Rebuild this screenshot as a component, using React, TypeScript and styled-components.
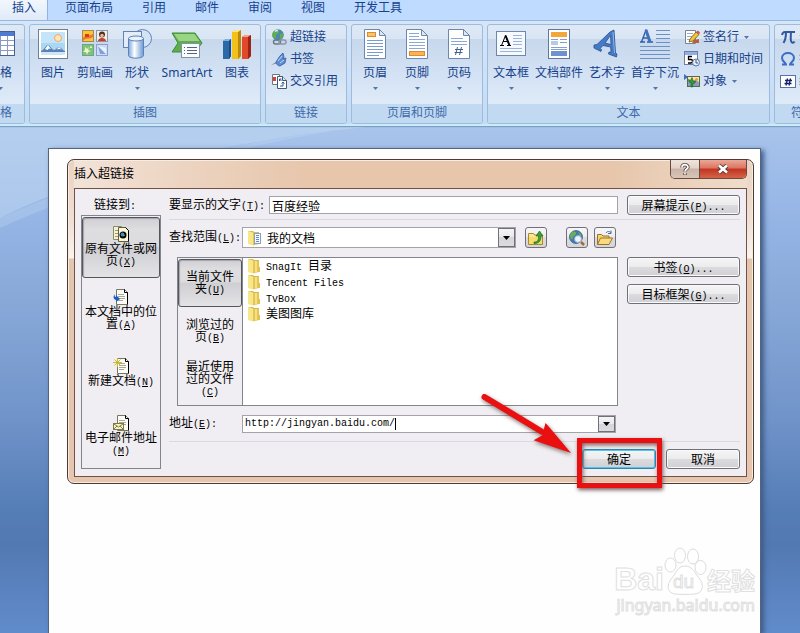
import React from "react";
import styled, { createGlobalStyle, css } from "styled-components";

const GlobalStyle = createGlobalStyle`
  * { box-sizing: border-box; }
  body { margin: 0; font: 12px/16px "Noto Sans", "Noto Sans CJK SC", sans-serif; color: #000; }
  button, input, select { font: inherit; color: inherit; margin: 0; padding: 0; border: 0; background: none; }
  ul { list-style: none; margin: 0; padding: 0; }
  svg { display: block; flex: none; }
`;

/* ---------- window ---------- */

const Screen = styled.div`
  position: relative;
  display: flex;
  flex-direction: column;
  min-height: 100vh;
  overflow: hidden;
  background: linear-gradient(#a8c4ec 127px, #93b3e4 230px, #88a9d8 300px, #7093c9 420px, #557db6 510px, #5379b2 545px, #618ccb 633px);
`;

const Swoosh = styled.svg`
  position: absolute;
  left: 0;
  top: 126px;
`;

const Tabs = styled.nav`
  display: flex;
  gap: 1px;
  height: 20px;
  background: #bfdbff;
  color: #15428b;
`;

const Tab = styled.button<{ $active?: boolean }>`
  flex: none;
  height: 20px;
  padding: 0 14px 4px;
  ${(p) =>
    p.$active &&
    css`
      padding: 0 11px 4px 12px;
      margin-right: 2px;
      background: linear-gradient(#f2f7fd, #dfeaf8);
      border-right: 1px solid #8db2e3;
    `}
`;

const Ribbon = styled.div`
  position: relative;
  display: flex;
  gap: 4px;
  height: 106px;
  padding: 3px 0;
  background: linear-gradient(#d6e6f9, #c4dbf5);
  border-top: 1px solid #97b8e2;
  border-bottom: 2px solid #c9edf8;
  box-shadow: 0 1px 1px #7f9cc4;
  overflow: hidden;
`;

const Group = styled.section<{ $cut?: boolean }>`
  display: flex;
  flex-direction: column;
  flex: none;
  height: 100px;
  min-width: 50px;
  margin-left: ${(p) => (p.$cut ? "-25px" : "0")};
  border: 1px solid #9dbbdc;
  border-radius: 3px;
  overflow: hidden;
  background: linear-gradient(#dfe9f6, #d9e5f4 14px, #c8d8ec 14px, #d3e2f4 50px, #dfebf8 80px);
`;

const GroupBody = styled.div`
  display: flex;
  flex: 1;
  justify-content: center;
  padding: 4px 2px 0;
  color: #15428b;
`;

const GroupTitle = styled.div`
  height: 19px;
  line-height: 18px;
  text-align: center;
  background: #c1d9f1;
  color: #3e6aaa;
`;

const BigButton = styled.button<{ $size?: "wide" | "art" }>`
  display: flex;
  flex-direction: column;
  align-items: center;
  flex: none;
  width: ${(p) => (p.$size === "wide" ? "54px" : p.$size === "art" ? "58px" : "42px")};
  white-space: nowrap;
`;

const BigLabel = styled.span`
  margin: 5px 0 5px;
  line-height: 18px;
`;

const SmallList = styled.div<{ $loose?: boolean }>`
  display: flex;
  flex-direction: column;
  flex: none;
  margin-top: -1px;
  padding: ${(p) => (p.$loose ? "0 6px 0 3px" : "0 4px 0 2px")};
`;

const SmallButton = styled.button`
  display: flex;
  align-items: center;
  gap: 3px;
  height: 22px;
  padding-bottom: 4px;
  white-space: nowrap;
`;

const SmallLabel = styled.span`
  margin-right: 2px;
`;

const Down = () => (
  <svg width="5" height="3" viewBox="0 0 5 3">
    <path d="M0 0h5L2.5 3z" fill="#5577a8" />
  </svg>
);

function Big({ icon, label, drop, size }: { icon: React.ReactNode; label: string; drop?: boolean; size?: "wide" | "art" }) {
  return (
    <BigButton $size={size}>
      {icon}
      <BigLabel>{label}</BigLabel>
      {drop && <Down />}
    </BigButton>
  );
}

function Small({ icon, label, drop }: { icon: React.ReactNode; label: string; drop?: boolean }) {
  return (
    <SmallButton>
      {icon}
      {drop ? <SmallLabel>{label}</SmallLabel> : <span>{label}</span>}
      {drop && <Down />}
    </SmallButton>
  );
}

/* ---------- ribbon icons ---------- */

const Icon30 = ({ children }: { children: React.ReactNode }) => (
  <svg width="30" height="30" viewBox="0 0 30 30">
    {children}
  </svg>
);
const Icon16 = ({ children }: { children: React.ReactNode }) => (
  <svg width="16" height="16" viewBox="0 0 16 16">
    {children}
  </svg>
);

const TableIcon = () => (
  <Icon30>
    <rect x=".5" y="2.5" width="29" height="24" fill="#fff" stroke="#4a5f8c" />
    <rect x="1" y="3" width="28" height="4" fill="#4f7cd0" />
    <path d="M1 11.5h28M1 16.5h28M1 21.5h28M8.5 7v19M15.5 7v19M22.5 7v19" stroke="#8b9bc0" />
  </Icon30>
);

const PictureIcon = () => (
  <Icon30>
    <rect x=".5" y=".5" width="29" height="29" fill="#fff" stroke="#6c8096" />
    <rect x="3" y="3" width="24" height="23" fill="#a9d7f4" />
    <path d="M3 3h24v11H3z" fill="#c4e5f9" />
    <circle cx="20" cy="9" r="3.5" fill="#fde6bd" stroke="#f0a860" />
    <path d="M3 22c3-1 5-6 7-6s4 5 6 5 3-3 5-3 4 4 6 4v4H3z" fill="#5b82b8" />
    <path d="M7 20l3-4 3 4-2-.5-1.500 1.500zM18.500 20.500l2.500-2.500 2.500 2.500-2.500-.5z" fill="#fff" />
    <path d="M3 23h24v3H3z" fill="#cfe6f5" />
  </Icon30>
);

const ClipArtIcon = () => (
  <Icon30>
    <rect x="2.500" y="1.500" width="11" height="11" fill="#fbc534" stroke="#a58a5a" />
    <path d="M3 9c3-4 6-1 10-4v3c-4 3-7 0-10 4z" fill="#f3742a" />
    <path d="M5 5h4v3H5z" fill="#d83a1c" />
    <rect x="16.500" y="1.500" width="11" height="11" fill="#f3efe4" stroke="#8b97a8" />
    <circle cx="22" cy="5.500" r="3" fill="#4a3226" />
    <circle cx="22" cy="6.500" r="1.800" fill="#f2b48a" />
    <path d="M18 12c0-4 8-4 8 0z" fill="#c2402c" />
    <rect x="2.500" y="15.500" width="11" height="11" fill="#7cc47a" stroke="#74a08a" />
    <path d="M5 18l2 2 2-2-1 3 3 1-3 1-1 3-1-3-3 0 2-2zM10 17l1 1 1-1v2h-2z" fill="#eef7c4" />
    <rect x="16.500" y="15.500" width="11" height="11" fill="#cddcf6" stroke="#8b9fc8" />
    <path d="M18 17l8 8H20z" fill="#7f9fe0" />
    <path d="M18 17l8 8V19z" fill="#fff" opacity=".6" />
  </Icon30>
);

const ShapesIcon = () => (
  <Icon30>
    <defs>
      <linearGradient id="cyl">
        <stop offset="0" stopColor="#7ba7df" />
        <stop offset=".4" stopColor="#fff" />
        <stop offset="1" stopColor="#6a98d6" />
      </linearGradient>
    </defs>
    <circle cx="20.500" cy="9.500" r="9" fill="#d3e3f6" stroke="#6283b5" />
    <rect x="1.500" y="2.500" width="18" height="16" fill="#e3edf9" stroke="#6283b5" />
    <path d="M6.500 9.500v17c0 3.500 15 3.500 15 0v-17z" fill="url(#cyl)" stroke="#5d80b5" />
    <ellipse cx="14" cy="9.500" rx="7.500" ry="2.500" fill="#eaf2fc" stroke="#5d80b5" />
  </Icon30>
);

const SmartArtIcon = () => (
  <svg width="32" height="30" viewBox="0 0 32 30">
    <path d="M1 4h23l7 10-7 9H1l6-9z" fill="#5fae4e" stroke="#3f8b3a" />
    <path d="M3 5h20.500l5 7H8z" fill="#9ad583" />
    <rect x="10.500" y="14.500" width="18" height="14" fill="#fafcff" stroke="#8392a8" />
    <path d="M16 18.500h10M16 21.500h10M16 24.500h10M13 18.500h1M13 21.500h1M13 24.500h1" stroke="#52667f" />
  </svg>
);

const ChartIcon = () => (
  <Icon30>
    <path d="M1 12l3-2h5v17l-2 3H1z" fill="#2a6aa8" />
    <path d="M1 12l3-2h5l-2 2z" fill="#7db6e2" />
    <path d="M7 12l2-2v17l-2 3z" fill="#1c4b80" />
    <path d="M10 3l3-2h6v26l-2 3h-7z" fill="#f2c21a" />
    <path d="M10 3l3-2h6l-2 2z" fill="#fbe680" />
    <path d="M16 3l3-2v26l-3 3z" fill="#bd8a08" />
    <path d="M20 8l3-2h6v21l-3 3h-6z" fill="#e2482a" />
    <path d="M20 8l3-2h6l-3 2z" fill="#f6a48c" />
    <path d="M26 8l3-2v21l-3 3z" fill="#9c2414" />
  </Icon30>
);

const GlobeLink = () => (
  <Icon16>
    <circle cx="7" cy="6" r="5.800" fill="#4b86b8" />
    <path d="M3 2c3-2 5-1 5 1S4 5 5 8 2 9 1.500 7 2 3 3 2zM9 5l3-1c1 3-1 6-3 6z" fill="#5fb04c" />
    <path d="M4 2.500c1-1 2-1 3-1" stroke="#d6f0d0" strokeWidth="1.500" />
    <rect x="2.500" y="11" width="7" height="4" rx="2" fill="none" stroke="#6d7685" strokeWidth="1.500" />
    <rect x="8" y="11" width="7" height="4" rx="2" fill="none" stroke="#8c94a2" strokeWidth="1.500" />
  </Icon16>
);

const BookmarkIcon = () => (
  <Icon16>
    <path d="M0 14l7-4 1 2z" fill="#7e8ca4" />
    <path d="M5 11c2-3 4-7 7-9l1 4-1 2 3-1-1 5-5 3c-2 0-4-2-4-4z" fill="#5f8bd6" stroke="#365d9e" strokeWidth=".8" />
    <path d="M7 10l4-5M9 12l4-3" stroke="#c3d8f6" />
  </Icon16>
);

const CrossRefIcon = () => (
  <Icon16>
    <path d="M1.500 1.500h7v10h-7z" fill="#fff" stroke="#6b7789" />
    <path d="M2 4h3v4H2z" fill="#d8432c" />
    <path d="M6.500 3.500h5l4 4v8h-9z" fill="#fff" stroke="#48566c" />
    <path d="M11.500 3.500v4h4" fill="#dbe4f0" stroke="#48566c" />
    <path d="M8.500 8v-2h2M8.500 6l2 2M9 13h3v-4m-1.500 1.500L12 9l1.500 1.500" stroke="#2c55a4" fill="none" />
  </Icon16>
);

const DocSheet = ({ children }: { children: React.ReactNode }) => (
  <Icon30>
    <path d="M4.500.500h15l6 6v23h-21z" fill="#fff" stroke="#6d88ae" />
    <path d="M19.500.500v6h6z" fill="#dce8f6" stroke="#6d88ae" />
    {children}
  </Icon30>
);

const HeaderIcon = () => (
  <DocSheet>
    <rect x="7.500" y="3.500" width="8" height="4" fill="#f9c36a" stroke="#e08a2a" />
    <path d="M7 11.500h16M7 14.500h16M7 17.500h16M7 20.500h16M7 23.500h16M7 26.500h12" stroke="#7b9bd0" />
  </DocSheet>
);
const FooterIcon = () => (
  <DocSheet>
    <path d="M7 4.500h10M7 7.500h10M7 10.500h16M7 13.500h16M7 16.500h16M7 19.500h16" stroke="#8ba8d8" />
    <rect x="7.500" y="22.500" width="15" height="4" fill="#f9b25a" stroke="#e08a2a" />
  </DocSheet>
);
const NumberIcon = () => (
  <DocSheet>
    <path d="M7 9.500h12M7 12.500h16M7 15.500h16" stroke="#8ba8d8" />
    <path d="M13.500 18l-2 8M17.500 18l-2 8M11 20.500h8M10.500 23.500h8" stroke="#45618f" />
  </DocSheet>
);

const TextBoxIcon = () => (
  <Icon30>
    <rect x=".5" y="2.500" width="29" height="24" fill="#f6f9fd" stroke="#6d88ae" />
    <path d="M4 16.500h4M11 16.500h4M5.500 16.500l4-10 4 10M7 12.500h4.500" stroke="#000" fill="none" />
    <path d="M9.500 6.500l4 10" stroke="#000" strokeWidth="2" />
    <path d="M17 6.500h9M17 9.500h9M17 12.500h9M17 15.500h9M4 19.500h22M4 22.500h22" stroke="#9db4da" />
  </Icon30>
);

const PartsIcon = () => (
  <Icon30>
    <rect x="4.500" y=".5" width="21" height="29" fill="#fff" stroke="#5e78a2" />
    <rect x="7" y="3" width="16" height="5" fill="#f5a638" />
    <path d="M7 10.500h7M16 10.500h7M16 13.500h7M7 18.500h16M7 20.500h16" stroke="#86a0cc" />
    <rect x="7" y="12" width="7" height="4" fill="#b9c9e4" />
    <rect x="7" y="22" width="16" height="5" fill="#6a93cf" />
  </Icon30>
);

const WordArtIcon = () => (
  <Icon30>
    <path d="M2 16l3-.5L18 3l4-2 1.500 23 1.500 1-.5 3-8-3 .5-2 2 .3-.3-5.300-7.700-1.500-3 3 1.500 1-.5 2-7-3.500zM13 14l6 1.500-.5-9z" fill="#4679c6" stroke="#27508f" strokeWidth=".8" fillRule="evenodd" />
    <path d="M21 3l1.500 21" stroke="#8db5ee" />
  </Icon30>
);

const DropCapIcon = () => (
  <Icon30>
    <path d="M0 13h5M7 13h6M1.500 13L6 1l4.500 12M3.500 9h5" stroke="#2f5fa8" fill="none" strokeWidth="1.400" />
    <path d="M6 1l4 12" stroke="#3e72be" strokeWidth="3" />
    <path d="M16 1.500h14M16 5.500h14M16 9.500h14M16 13.500h14M0 17.500h30M0 21.500h30M0 25.500h30M0 29.500h30" stroke="#6d91c6" />
  </Icon30>
);

const SignIcon = () => (
  <Icon16>
    <path d="M1.500 1.500h10v13h-10z" fill="#fff" stroke="#77839a" />
    <path d="M3 4.500h6M3 7.500h5M3 10.500h3" stroke="#9aabc6" />
    <path d="M10 11l5-1v4H8z" fill="#b65f3c" />
    <path d="M5 13l1-3 6-7 3 2.500L9 12z" fill="#f2c332" stroke="#6a5528" strokeWidth=".8" />
    <path d="M12 3l3 2.500 1-2-2-2z" fill="#d3544a" />
  </Icon16>
);

const DateIcon = () => (
  <Icon16>
    <rect x=".5" y=".5" width="13" height="13" fill="#fff" stroke="#6d7f9f" />
    <path d="M1 1h12v3H1z" fill="#8fb1e6" />
    <path d="M8 5.500H4.500v3H7c2 0 2 3.500 0 3.500H4" fill="none" stroke="#000" strokeWidth="1.300" />
    <circle cx="12" cy="11.500" r="3.500" fill="#e5eefa" stroke="#5c7298" />
    <path d="M12 9v3h2" fill="none" stroke="#3f5680" />
  </Icon16>
);

const ObjectIcon = () => (
  <Icon16>
    <path d="M0 1l4 3-4 3z" fill="#3c6fc0" />
    <rect x="3.500" y="3.500" width="12" height="10" fill="#fbe3ac" stroke="#566a4c" />
    <path d="M4 9c3-2 8-2 11 0v4H4z" fill="#8c9cc0" />
    <path d="M7 14V9.500c-2 0-3-1-2.500-3l2 1 1.500-3 1.500 4 2-1c.5 2-.5 3-2.500 3l-.5 3.500z" fill="#2f9a3c" stroke="#1c5c25" strokeWidth=".6" />
    <circle cx="12.500" cy="6.500" r="1.500" fill="#f29a2e" />
  </Icon16>
);

const PiIcon = () => (
  <Icon16>
    <path d="M2 6c.5-2.500 1.500-3 3-3h10M6 3c0 5-.5 8-2.500 11M11 3c-.5 7-.5 10 1 10.500s2 0 2.500-1" fill="none" stroke="#3159a3" strokeWidth="2" />
  </Icon16>
);
const OmegaIcon = () => (
  <Icon16>
    <path d="M2 13.500h4c0-1.500-4-3-4-6.500C2 3.500 5 2 8 2s6 1.500 6 5c0 3.500-4 5-4 6.500h4" fill="none" stroke="#3a6dc4" strokeWidth="2" />
  </Icon16>
);
const HashIcon = () => (
  <Icon16>
    <rect x=".5" y="2.500" width="15" height="12" fill="#fff" stroke="#5573a8" />
    <path d="M7.500 5.500l-1.500 7M10.500 5.500l-1.500 7M5 7.500h7M4.500 10.500h7" stroke="#14206a" strokeWidth="1.300" />
  </Icon16>
);

/* ---------- document and dialog ---------- */

const Page = styled.main`
  position: relative;
  flex: 1;
  margin: 22px 39px 0 48px;
  padding: 10px 6px 20px 18px;
  background: #fefefe;
  border: 1px solid #56637c;
  border-bottom: 0;
  box-shadow: 3px 2px 5px #3f5b8a;
`;

const Dialog = styled.section`
  position: relative;
  padding: 0 6px 6px;
  border: 1px solid #4c3a33;
  border-radius: 7px;
  background: linear-gradient(#ead2c0, #efdfd5 60px, #faf4f0 98px, #e4c5ad 99px, #e6c6ae);
  box-shadow: inset 0 0 0 1px #f8ebe0;
  font-family: "Noto Sans CJK SC", sans-serif;
`;

const TitleBar = styled.header`
  display: flex;
  align-items: flex-start;
  justify-content: space-between;
  height: 27px;
  margin-top: 1px;
  background: linear-gradient(90deg, #f2e3d8, #edd5c3 15%, #e7c6ab 35%, #e7c6ab 80%, #efdccb);
`;

const Title = styled.h1`
  margin: 3px 0 0;
  font-size: 12px;
  font-weight: 400;
  line-height: 18px;
`;

const WindowButtons = styled.div`
  display: flex;
  margin-top: -1px;
  border: 1px solid #6b4b40;
  border-top: 0;
  border-radius: 0 0 5px 5px;
  overflow: hidden;
`;

const WindowButton = styled.button<{ $close?: boolean }>`
  display: flex;
  align-items: center;
  justify-content: center;
  height: 18px;
  width: ${(p) => (p.$close ? "47px" : "28px")};
  background: ${(p) =>
    p.$close
      ? "linear-gradient(#eba798, #dc7460 45%, #c03420 50%, #d4644a)"
      : "linear-gradient(#f0e4dc, #e3d2c7 45%, #c9b3a7 50%, #d9c6b8)"};
  border-left: ${(p) => (p.$close ? "1px solid #6b4b40" : "0")};
`;

const Body = styled.div`
  display: flex;
  gap: 8px;
  padding: 6px;
  border: 1px solid #6f5145;
  background: #f0eef2;
`;

const LinkColumn = styled.div`
  display: flex;
  flex-direction: column;
  flex: none;
  width: 80px;
`;

const ColumnTitle = styled.div`
  height: 20px;
  padding-left: 13px;
  line-height: 18px;
`;

const Choices = styled.div<{ $inner?: boolean }>`
  display: flex;
  flex-direction: column;
  gap: ${(p) => (p.$inner ? "0" : "2px")};
  flex: none;
  width: ${(p) => (p.$inner ? "65px" : "80px")};
  margin-left: ${(p) => (p.$inner ? "8px" : "0")};
  padding: 1px 0;
  border: 1px solid #83858d;
  border-right-width: ${(p) => (p.$inner ? "0" : "1px")};
`;

const Choice = styled.button<{ $on?: boolean; $inner?: boolean }>`
  display: flex;
  flex-direction: column;
  align-items: center;
  justify-content: center;
  height: ${(p) => (p.$inner ? "48px" : "61px")};
  line-height: 12px;
  text-align: center;
  border: 1px solid transparent;
  border-radius: 3px;
  white-space: nowrap;
  ${(p) =>
    p.$on &&
    css`
      border-color: #55565c;
      background: linear-gradient(#d0d0d4, #dedee1 20%, #dcdcdf 48%, #cfcfd3 50%, #e3e3e6);
      box-shadow: inset 1px 1px 1px #a5a5ab;
    `}
`;

const Latin = styled.span`
  font-family: "Liberation Mono", monospace;
  font-size: 10px;
`;

const Main = styled.div`
  display: flex;
  flex-direction: column;
  flex: 1;
  min-width: 0;
`;

const Row = styled.div<{ $top?: number }>`
  display: flex;
  align-items: center;
  margin-top: ${(p) => p.$top ?? 0}px;
`;

const FieldLabel = styled.label<{ $auto?: boolean }>`
  flex: none;
  width: ${(p) => (p.$auto ? "100px" : "73px")};
  white-space: nowrap;
`;

const Rule = styled.hr<{ $low?: boolean }>`
  width: 100%;
  height: 1px;
  margin: ${(p) => (p.$low ? "8px" : "4px")} 0 7px;
  border: 0;
  background: #d9d9e2;
`;

const TextInput = styled.input`
  flex: 1;
  min-width: 0;
  height: 18px;
  padding: 0 2px;
  border: 1px solid #a3a3a9;
  background: #fff;
`;

const ToolButton = styled.button`
  display: flex;
  align-items: center;
  justify-content: center;
  flex: none;
  width: 22px;
  height: 21px;
  border: 1px solid #707078;
  border-radius: 3px;
  background: linear-gradient(#f7f7f8, #ececef 48%, #dcdce0 50%, #d5d5da);
`;

const PushButton = styled.button<{ $primary?: boolean; $wide?: boolean }>`
  display: block;
  flex: none;
  width: ${(p) => (p.$wide ? "113px" : "74px")};
  height: 20px;
  line-height: 18px;
  border: 1px solid ${(p) => (p.$primary ? "#2f86a8" : "#707078")};
  border-radius: 3px;
  background: linear-gradient(#f5f5f6, #ececee 48%, #dcdcdf 50%, #d0d0d5);
  box-shadow: inset 0 0 0 1px ${(p) => (p.$primary ? "#54c4ee" : "#fafafa")};
`;

const Combo = styled.div`
  position: relative;
  display: flex;
  flex: 1;
  height: 21px;
  border: 1px solid #a3a3a9;
  background: #fff;
`;

const FolderSelect = styled.select`
  appearance: none;
  flex: 1;
  min-width: 0;
  padding-left: 24px;
  outline: none;
`;

const ComboIcon = styled.span`
  position: absolute;
  left: 4px;
  top: 2px;
`;

const ComboArrow = styled.span`
  position: absolute;
  right: 0;
  top: 0;
  display: flex;
  align-items: center;
  justify-content: center;
  width: 17px;
  height: 19px;
  border: 1px solid #707078;
  background: linear-gradient(#f5f5f6, #e9e9ec 48%, #d5d5da 50%, #dcdce0);
  pointer-events: none;
`;

const AddressBox = styled.div`
  display: flex;
  align-items: center;
  flex: 1;
  height: 18px;
  border: 1px solid #a3a3a9;
  background: #fff;
`;

const AddressInput = styled.input`
  field-sizing: content;
  height: 16px;
  padding-left: 2px;
  font-family: "Liberation Mono", monospace;
  font-size: 10px;
  outline: none;
`;

const Caret = styled.span`
  width: 1px;
  height: 12px;
  background: #000;
`;

const DropButton = styled.button`
  display: flex;
  align-items: center;
  justify-content: center;
  width: 17px;
  height: 16px;
  margin-left: auto;
  border: 1px solid #707078;
  background: linear-gradient(#f5f5f6, #e9e9ec 48%, #d5d5da 50%, #dcdce0);
`;

const Tools = styled.div`
  display: flex;
  flex: none;
  gap: 6px;
  margin: 0 124px 0 9px;
`;

const Spacer = styled.span`
  width: 7px;
`;

const Files = styled.ul`
  flex: 1;
  padding: 0 0 0 4px;
  border: 1px solid #83858d;
  background: #fff;
`;

const FileButton = styled.button`
  display: flex;
  align-items: center;
  gap: 5px;
  height: 16px;
  line-height: 16px;
`;

const Panel = styled.div`
  display: flex;
  height: 149px;
  margin-top: 9px;
`;

const SideButtons = styled.div`
  display: flex;
  flex-direction: column;
  gap: 7px;
  margin-left: 9px;
`;

const AddressGap = styled.span`
  flex: none;
  width: 124px;
`;

const Footer = styled.div`
  display: flex;
  justify-content: flex-end;
  gap: 10px;
  margin-bottom: 1px;
`;

const Marked = styled.div`
  position: relative;
`;

const RedBox = styled.div`
  position: absolute;
  left: -5px;
  top: -11px;
  width: 85px;
  height: 50px;
  border: 5px solid #ea0f10;
  box-shadow: 1px 2px 4px #7a5a5a, inset 1px 2px 4px #7a5a5a;
  pointer-events: none;
`;

const RedArrow = styled.svg`
  position: absolute;
  right: 85px;
  bottom: 13px;
  filter: drop-shadow(1px 2px 2px rgba(60, 30, 30, 0.6));
  pointer-events: none;
`;

const Watermark = styled.div`
  position: absolute;
  right: 5px;
  bottom: 18px;
  color: #fff;
  -webkit-text-stroke: 1px #e0e0e0;
`;

const Logo = styled.div`
  display: flex;
  align-items: flex-end;
  height: 48px;
`;

const Bai = styled.span`
  font: 700 32px/32px "Liberation Sans", sans-serif;
`;

const Paw = styled.span`
  position: relative;
`;

const Du = styled.span`
  position: absolute;
  left: 9px;
  bottom: 4px;
  font: 400 19px/18px "Liberation Sans", sans-serif;
`;

const Jingyan = styled.span`
  font: 700 24px/30px "Noto Sans CJK SC", sans-serif;
`;

const Site = styled.div`
  font: 16px/20px "Noto Sans", sans-serif;
  text-align: right;
`;

const Triangle = () => (
  <svg width="7" height="4" viewBox="0 0 7 4">
    <path d="M0 0h7L3.500 4z" fill="#000" />
  </svg>
);

const FolderIcon = ({ doc }: { doc?: boolean }) => (
  <svg width="14" height="16" viewBox="0 0 14 16">
    <path d="M1 1h5l1 1h5v12H1z" fill="#dcb845" />
    <path d="M1 1l5 1.500V15.500L1 14z" fill="#f8e68a" />
    <path d="M6 3h6v11l-6 1.500z" fill="#e6c653" />
    <path d="M8 3h2v11l-2 .5z" fill="#f4e08a" />
    <path d="M11 9h2v5h-2z" fill="#e3bf4c" />
    {doc && (
      <>
        <rect x="7.500" y="3.500" width="6" height="10" fill="#f5f9ff" stroke="#8ba0bb" />
        <path d="M9 5.500h3M9 7.500h3M9 9.500h3M9 11.500h3" stroke="#5a8fd4" />
      </>
    )}
  </svg>
);

const SheetShape = ({ x = 4 }: { x?: number }) => (
  <g transform={`translate(${x} 0)`}>
    <path d="M.5.500h8l3 3v12H.5z" fill="#fdfdf6" stroke="#77775f" />
    <path d="M8.500.500l3 3v12" fill="none" stroke="#000" />
    <path d="M8.500.500v3h3" fill="#fff" stroke="#000" />
    <path d="M2 5.500h6M2 7.500h7M2 9.500h7M2 11.500h5" stroke="#a8a89c" />
  </g>
);

const WebFileIcon = () => (
  <Icon16>
    <path d="M.5.500h8v13h-8z" fill="#f5f2d3" stroke="#8d8a66" />
    <path d="M2 4.500h3M2 7.500h3M2 10.500h3" stroke="#9b997c" />
    <path d="M5.500 1.500h7l3 3v11h-10z" fill="#fdf9d8" stroke="#605c40" />
    <path d="M12.500 1.500l3 3v11" fill="none" stroke="#000" />
    <circle cx="10" cy="9" r="3.500" fill="#000" />
    <circle cx="9.500" cy="8.500" r="1.900" fill="#3f86c4" />
    <path d="M10 10l2-1" stroke="#69b34c" />
  </Icon16>
);
const PlaceIcon = () => (
  <Icon16>
    <SheetShape x={3} />
    <path d="M2 5c-2 2-2 5 1 6v2l4-3-4-4v2c-1 0-2-1-1-3z" fill="#1e5bc0" />
  </Icon16>
);
const NewDocIcon = () => (
  <Icon16>
    <SheetShape />
    <path d="M4.500 0v9M0 4.500h9M1.500 1.500l6 6M7.500 1.500l-6 6" stroke="#cdb92a" />
  </Icon16>
);
const MailIcon = () => (
  <Icon16>
    <SheetShape />
    <rect x=".5" y="8.500" width="10" height="6" fill="#faf6c4" stroke="#7d794a" />
    <path d="M1 9l4.500 3L10 9M1 14l3-3M10 14l-3-3" fill="none" stroke="#7d794a" />
  </Icon16>
);

const UpIcon = () => (
  <Icon16>
    <path d="M.5 3.500h5l1 1.500h8v9.500H.5z" fill="#fbe891" stroke="#a98a2c" />
    <path d="M1 7h13v7H1z" fill="#f6dc6c" />
    <path d="M6 12c4 0 4.500-2 4.500-6H8l3.500-5 3.500 5h-2c0 5-2 7.500-7 7.500z" fill="#37a037" stroke="#1d6a1f" strokeWidth=".7" />
  </Icon16>
);
const WebSearchIcon = () => (
  <Icon16>
    <circle cx="7" cy="7" r="6.500" fill="#4278b4" stroke="#2c5688" strokeWidth=".7" />
    <path d="M3 2c3-1 5 0 4 2s-4 2-3 5c-2 1-3-1-3-3s1-3 2-4z" fill="#69ad57" />
    <path d="M9 2l3 2c1 2 0 3-1 3z" fill="#69ad57" />
    <circle cx="9" cy="9" r="3.500" fill="#e9f4fd" stroke="#8fa8c4" />
    <path d="M12 12l3 3" stroke="#a66a38" strokeWidth="2.500" />
  </Icon16>
);
const OpenIcon = () => (
  <Icon16>
    <path d="M.5 14V4.500h4l1.500 1.500h6v3" fill="#f7d36e" stroke="#98752a" />
    <path d="M.5 14.500l3-6.500h12l-3.500 6.500z" fill="#fcd981" stroke="#98752a" />
    <path d="M9 3c1-2 4-2 5 0m0-2.500v3h-3" fill="none" stroke="#4a6da8" />
  </Icon16>
);

const Key = ({ k, tail = "" }: { k: string; tail?: string }) => (
  <Latin>
    (<u>{k}</u>){tail}
  </Latin>
);

const tabNames = ["插入", "页面布局", "引用", "邮件", "审阅", "视图", "开发工具"];
const folders = [
  { latin: "SnagIt ", name: "目录" },
  { latin: "Tencent Files", name: "" },
  { latin: "TvBox", name: "" },
  { latin: "", name: "美图图库" },
];

export default function App() {
  return (
    <Screen>
      <GlobalStyle />
      <Swoosh width="440" height="110" viewBox="0 0 440 110">
        <path d="M0 0h380C270 8 100 42 0 92z" fill="#c2daf2" opacity=".5" />
        <path d="M0 92C110 42 270 8 380 0h-20C250 18 110 52 0 102z" fill="#c2daf2" opacity=".3" />
      </Swoosh>

      <Tabs>
        {tabNames.map((name, i) => (
          <Tab key={name} $active={i === 0}>
            {name}
          </Tab>
        ))}
      </Tabs>

      <Ribbon>
        <Group $cut>
          <GroupBody>
            <Big icon={<TableIcon />} label="表格" drop />
          </GroupBody>
          <GroupTitle>表格</GroupTitle>
        </Group>
        <Group>
          <GroupBody>
            <Big icon={<PictureIcon />} label="图片" />
            <Big icon={<ClipArtIcon />} label="剪贴画" />
            <Big icon={<ShapesIcon />} label="形状" drop />
            <Big icon={<SmartArtIcon />} label="SmartArt" size="art" />
            <Big icon={<ChartIcon />} label="图表" />
          </GroupBody>
          <GroupTitle>插图</GroupTitle>
        </Group>
        <Group>
          <GroupBody>
            <SmallList $loose>
              <Small icon={<GlobeLink />} label="超链接" />
              <Small icon={<BookmarkIcon />} label="书签" />
              <Small icon={<CrossRefIcon />} label="交叉引用" />
            </SmallList>
          </GroupBody>
          <GroupTitle>链接</GroupTitle>
        </Group>
        <Group>
          <GroupBody>
            <Big icon={<HeaderIcon />} label="页眉" drop />
            <Big icon={<FooterIcon />} label="页脚" drop />
            <Big icon={<NumberIcon />} label="页码" drop />
          </GroupBody>
          <GroupTitle>页眉和页脚</GroupTitle>
        </Group>
        <Group>
          <GroupBody>
            <Big icon={<TextBoxIcon />} label="文本框" drop />
            <Big icon={<PartsIcon />} label="文档部件" drop size="wide" />
            <Big icon={<WordArtIcon />} label="艺术字" drop />
            <Big icon={<DropCapIcon />} label="首字下沉" drop size="wide" />
            <SmallList>
              <Small icon={<SignIcon />} label="签名行" drop />
              <Small icon={<DateIcon />} label="日期和时间" />
              <Small icon={<ObjectIcon />} label="对象" drop />
            </SmallList>
          </GroupBody>
          <GroupTitle>文本</GroupTitle>
        </Group>
        <Group>
          <GroupBody>
            <SmallList $loose>
              <Small icon={<PiIcon />} label="公式" />
              <Small icon={<OmegaIcon />} label="符号" />
              <Small icon={<HashIcon />} label="编号" />
            </SmallList>
          </GroupBody>
          <GroupTitle>符号</GroupTitle>
        </Group>
      </Ribbon>

      <Page>
        <Dialog role="dialog" aria-labelledby="dialog-title">
          <TitleBar>
            <Title id="dialog-title">插入超链接</Title>
            <WindowButtons>
              <WindowButton aria-label="帮助">
                <svg width="10" height="13" viewBox="0 0 10 13">
                  <path d="M2 4.500C2 .8 8 .8 8 4.300 8 6 5 6 5 8.500M5 10v2" fill="none" stroke="#5a4a48" strokeWidth="3.400" />
                  <path d="M2 4.500C2 .8 8 .8 8 4.300 8 6 5 6 5 8.500M5 10v1.500" fill="none" stroke="#fff" strokeWidth="1.700" />
                </svg>
              </WindowButton>
              <WindowButton $close aria-label="关闭">
                <svg width="12" height="10" viewBox="0 0 12 10">
                  <path d="M2 1.500l8 7M10 1.500l-8 7" stroke="#5c3a38" strokeWidth="4.400" />
                  <path d="M2 1.500l8 7M10 1.500l-8 7" stroke="#fff" strokeWidth="2.600" />
                </svg>
              </WindowButton>
            </WindowButtons>
          </TitleBar>

          <Body>
            <LinkColumn>
              <ColumnTitle>
                链接到<Latin>:</Latin>
              </ColumnTitle>
              <Choices>
                <Choice $on>
                  <WebFileIcon />
                  <span>
                    原有文件或网
                    <br />页<Key k="X" />
                  </span>
                </Choice>
                <Choice>
                  <PlaceIcon />
                  <span>
                    本文档中的位
                    <br />置<Key k="A" />
                  </span>
                </Choice>
                <Choice>
                  <NewDocIcon />
                  <span>
                    新建文档<Key k="N" />
                  </span>
                </Choice>
                <Choice>
                  <MailIcon />
                  <span>
                    电子邮件地址
                    <br />
                    <Key k="M" />
                  </span>
                </Choice>
              </Choices>
            </LinkColumn>

            <Main>
              <Row>
                <FieldLabel $auto htmlFor="shown">
                  要显示的文字<Key k="T" tail=":" />
                </FieldLabel>
                <TextInput id="shown" defaultValue="百度经验" />
                <SideButtons>
                  <PushButton $wide>
                    屏幕提示<Key k="P" tail="..." />
                  </PushButton>
                </SideButtons>
              </Row>
              <Rule />
              <Row>
                <FieldLabel htmlFor="folder">
                  查找范围<Key k="L" tail=":" />
                </FieldLabel>
                <Combo>
                  <FolderSelect id="folder">
                    <option>我的文档</option>
                  </FolderSelect>
                  <ComboIcon>
                    <FolderIcon doc />
                  </ComboIcon>
                  <ComboArrow>
                    <Triangle />
                  </ComboArrow>
                </Combo>
                <Tools>
                  <ToolButton aria-label="上一级">
                    <UpIcon />
                  </ToolButton>
                  <Spacer />
                  <ToolButton aria-label="浏览网页">
                    <WebSearchIcon />
                  </ToolButton>
                  <ToolButton aria-label="浏览文件">
                    <OpenIcon />
                  </ToolButton>
                </Tools>
              </Row>

              <Panel>
                <Choices $inner>
                  <Choice $inner $on>
                    <span>
                      当前文件
                      <br />夹<Key k="U" />
                    </span>
                  </Choice>
                  <Choice $inner>
                    <span>
                      浏览过的
                      <br />页<Key k="B" />
                    </span>
                  </Choice>
                  <Choice $inner>
                    <span>
                      最近使用
                      <br />
                      过的文件
                      <br />
                      <Key k="C" />
                    </span>
                  </Choice>
                </Choices>
                <Files>
                  {folders.map((f) => (
                    <li key={f.latin + f.name}>
                      <FileButton>
                        <FolderIcon />
                        <span>
                          <Latin>{f.latin}</Latin>
                          {f.name}
                        </span>
                      </FileButton>
                    </li>
                  ))}
                </Files>
                <SideButtons>
                  <PushButton $wide>
                    书签<Key k="O" tail="..." />
                  </PushButton>
                  <PushButton $wide>
                    目标框架<Key k="G" tail="..." />
                  </PushButton>
                </SideButtons>
              </Panel>

              <Row $top={8}>
                <FieldLabel htmlFor="address">
                  地址<Key k="E" tail=":" />
                </FieldLabel>
                <AddressBox>
                  <AddressInput id="address" defaultValue="http://jingyan.baidu.com/" />
                  <Caret />
                  <DropButton aria-label="最近的地址">
                    <Triangle />
                  </DropButton>
                </AddressBox>
                <AddressGap />
              </Row>
              <Rule $low />
              <Footer>
                <Marked>
                  <PushButton $primary>确定</PushButton>
                  <RedBox />
                  <RedArrow width="92" height="64" viewBox="0 0 92 64">
                    <path d="M5.500 5l57 34.500" stroke="#ea0f10" strokeWidth="6" strokeLinecap="round" />
                    <path d="M67 33l22 26-32-11 7-4z" fill="#ea0f10" stroke="#ea0f10" strokeWidth="2" />
                  </RedArrow>
                </Marked>
                <PushButton>取消</PushButton>
              </Footer>
            </Main>
          </Body>
        </Dialog>

        <Watermark>
          <Logo>
            <Bai>Bai</Bai>
            <Paw>
              <svg width="43" height="48" viewBox="0 0 43 48" fill="#fff" stroke="#dcdcdc">
                <ellipse cx="6.500" cy="18" rx="5.500" ry="7" />
                <ellipse cx="16" cy="8.500" rx="5.500" ry="7.500" />
                <ellipse cx="29" cy="9.500" rx="5.500" ry="7.500" />
                <ellipse cx="36.500" cy="20.500" rx="5.500" ry="7" />
                <path d="M21 19c-8 0-9 8-13 12-5 5-6 15 3 16 6 .5 14 .5 20 0 9-1 9-11 4-16-4-4-6-12-14-12z" />
              </svg>
              <Du>du</Du>
            </Paw>
            <Jingyan>经验</Jingyan>
          </Logo>
          <Site>jingyan.baidu.com</Site>
        </Watermark>
      </Page>
    </Screen>
  );
}
